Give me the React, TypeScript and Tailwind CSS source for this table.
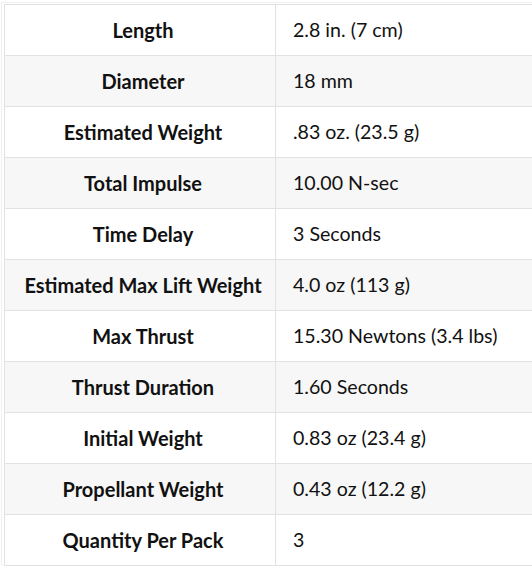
const specs = [
  ["Length", "2.8 in. (7 cm)"],
  ["Diameter", "18 mm"],
  ["Estimated Weight", ".83 oz. (23.5 g)"],
  ["Total Impulse", "10.00 N-sec"],
  ["Time Delay", "3 Seconds"],
  ["Estimated Max Lift Weight", "4.0 oz (113 g)"],
  ["Max Thrust", "15.30 Newtons (3.4 lbs)"],
  ["Thrust Duration", "1.60 Seconds"],
  ["Initial Weight", "0.83 oz (23.4 g)"],
  ["Propellant Weight", "0.43 oz (12.2 g)"],
  ["Quantity Per Pack", "3"],
];

export default function App() {
  return (
    <div className="w-[532px] h-[575px] overflow-hidden bg-white font-['Lato',_'Noto_Sans',_sans-serif] text-[20px] text-[#111]">
      <div className="ml-[1px] mt-[2px] w-[560px] border-l border-t border-[#f0f0f0] pl-[2px] pt-[1px]">
        <div className="grid grid-cols-[271px_1fr] border-l border-t border-[#e2e2e2]">
          {specs.map(([label, value], i) => (
            <div key={label} className="contents">
              <div
                className={`flex h-[51px] items-center justify-center border-b border-r border-[#e2e2e2] pl-[6px] font-bold ${
                  i % 2 === 1 ? "bg-[#f7f7f7]" : "bg-white"
                }`}
              >
                {label}
              </div>
              <div
                className={`flex h-[51px] items-center border-b border-r border-[#e2e2e2] pl-[17px] text-[19.6px] ${
                  i % 2 === 1 ? "bg-[#f7f7f7]" : "bg-white"
                }`}
              >
                {value}
              </div>
            </div>
          ))}
        </div>
      </div>
    </div>
  );
}
